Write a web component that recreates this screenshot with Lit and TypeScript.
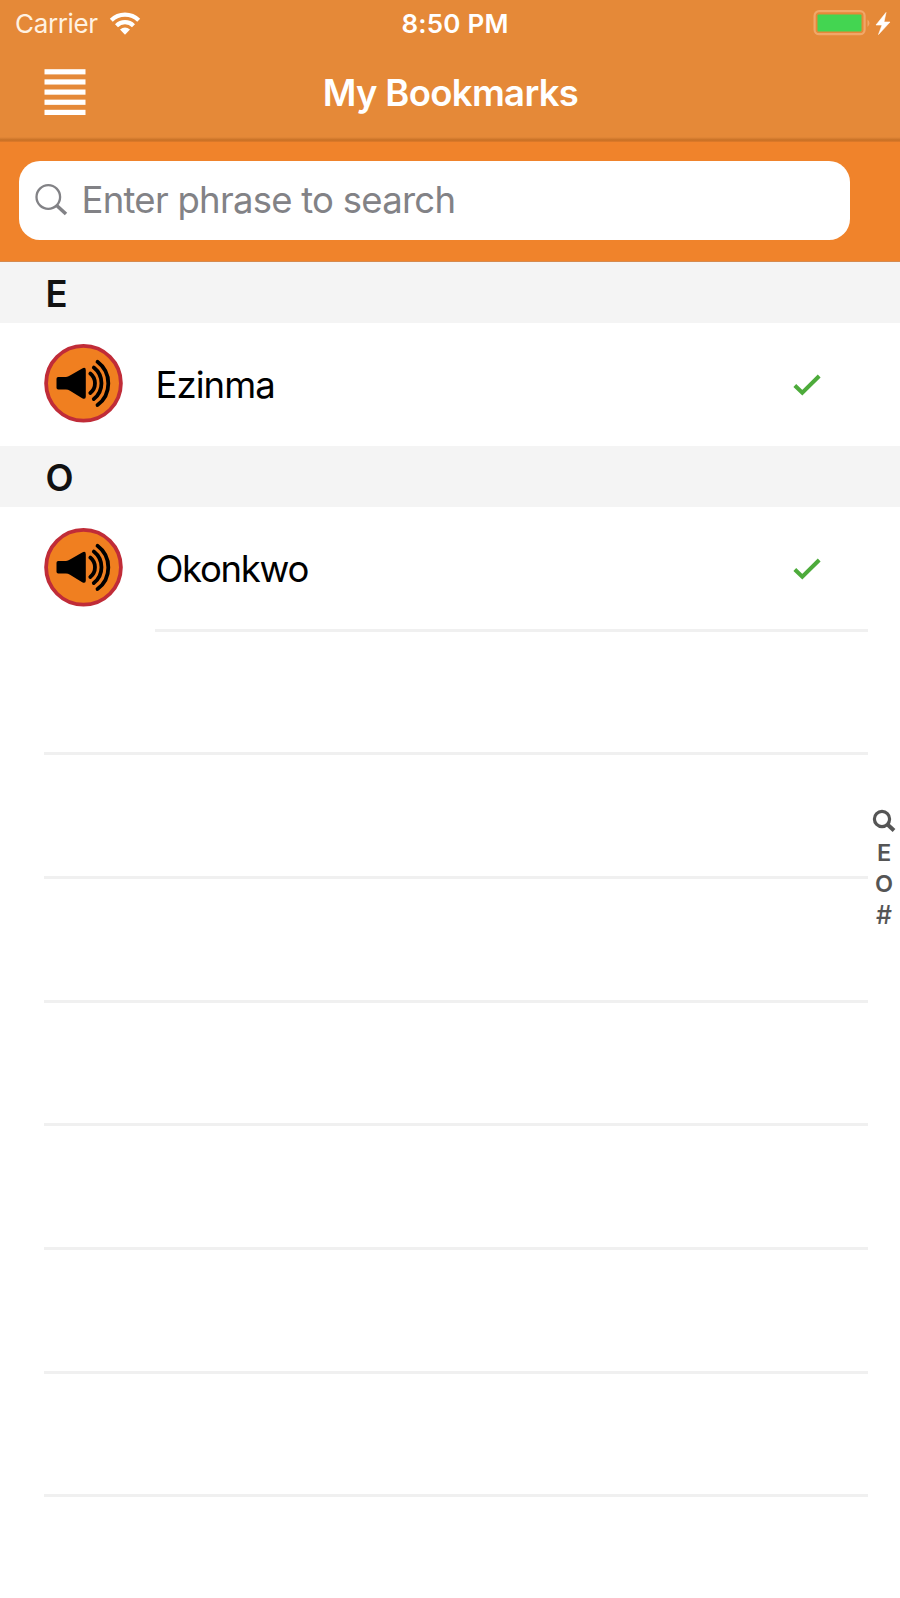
import { LitElement, html, css, svg } from "lit";
import { customElement, property } from "lit/decorators.js";

@customElement("speaker-badge")
class SpeakerBadge extends LitElement {
  static styles = css`
    :host { display: block; width: 80px; height: 80px; }
    .icon { display: block; }
  `;
  render() {
    return html`<svg class="icon" width="80" height="80" viewBox="0 0 80 80">
      <circle cx="39.5" cy="39.3" r="37.4" fill="#f07f20" stroke="#c02c38" stroke-width="3.800" />
      <path d="M14.200 33h7.800q2 0 4-1.400L38.200 24.400q3.600-1.700 3.600 1.800v26.300q0 3.500-3.600 1.800L26 46.800q-2-1.300-4-1.300h-7.800q-1.700 0-1.700-1.700v-9.100q0-1.700 1.700-1.700z" fill="#000" />
      <g fill="none" stroke="#000" stroke-width="3.800" stroke-linecap="round">
        <path d="M46.300 29.600a12.500 12.500 0 0 1 0 19.500" />
        <path d="M49.800 23.600a20 20 0 0 1 0 31.500" />
        <path d="M53.500 17.800a27 27 0 0 1 0 43.200" />
      </g>
    </svg>`;
  }
}

@customElement("bookmark-row")
class BookmarkRow extends LitElement {
  @property() name = "";
  static styles = css`
    :host { display: flex; box-sizing: border-box; height: 123.500px; padding: 21px 79px 0 44px; align-items: flex-start; }
    .name { flex: 1; margin-left: 31.500px; font-size: 36.500px; line-height: 44px; padding-top: 19px; color: #000; letter-spacing: var(--name-spacing, -0.95px); }
    .check { margin-top: 29px; }
  `;
  render() {
    return html`<speaker-badge></speaker-badge>
      <span class="name">${this.name}</span>
      <svg class="check" width="28" height="24" viewBox="0 0 28 24">
        <path d="M1.800 12.500L9.300 19.700L26.200 3" fill="none" stroke="#4dab3b" stroke-width="4" />
      </svg>`;
  }
}

@customElement("app-root")
class AppRoot extends LitElement {
  static styles = css`
    :host { display: block; position: relative; width: 900px; height: 1598px; overflow: hidden; background: #fff; font-family: Inter, "Liberation Sans", sans-serif; }
    .top { box-sizing: border-box; height: 142px; background: linear-gradient(#e58938 0 137px, #d17a2e 139px, #c66f24 140px, #e07b2b 142px); color: #fff; }
    .status { display: grid; grid-template-columns: 1fr auto 1fr; align-items: center; height: 48px; padding: 0 9px 0 15px; font-size: 26px; line-height: 32px; }
    .left { display: flex; align-items: center; gap: 11px; }
    .carrier { letter-spacing: -0.35px; color: #fff2e2; }
    .time { font-weight: 600; letter-spacing: 0.2px; padding-left: 3px; margin-right: -1px; }
    .right { display: flex; justify-content: flex-end; align-items: center; }
    .nav { display: grid; grid-template-columns: 1fr auto 1fr; align-items: start; padding: 21px 44px 0; }
    .title { font-size: 36.500px; font-weight: 600; line-height: 48px; letter-spacing: -0.68px; padding-left: 1px; }
    .search { box-sizing: border-box; height: 120px; padding: 19px 50px 0 18.500px; background: #f0832b; border-bottom: 1px solid #d58a50; }
    .field { box-sizing: border-box; height: 79px; display: flex; align-items: center; padding: 0 16px; background: #fff; border-radius: 21px; color: #828286; font-size: 36.500px; gap: 13px; }
    .hint { line-height: 44px; letter-spacing: -0.74px; margin-top: -2px; }
    .section { box-sizing: border-box; height: 60.500px; padding: 10px 45px 0 45.500px; background: #f4f4f4; font-size: 36.500px; line-height: 44px; font-weight: 600; color: #111; }
    .okonkwo { --name-spacing: -1.3px; }
    .line { margin: 0 32px 0 44px; height: 3px; background: #f0f0f0; }
    .line.inset { margin-left: 155px; margin-top: -1px; }
    .blank { display: flex; flex-direction: column; gap: 120.670px; padding-top: 120.300px; }
    .index { position: absolute; right: 2px; top: 808px; width: 28px; display: flex; flex-direction: column; align-items: center; color: #555; font-size: 23.500px; font-weight: 600; line-height: 31.300px; }
    .glass { height: 29px; }
    .hash { font-weight: 500; font-size: 25px; }
  `;
  render() {
    return html`
      <header class="top">
        <div class="status">
          <div class="left">
            <span class="carrier">Carrier</span>
            <svg width="32" height="24" viewBox="0 0 32 24">
              <g fill="none" stroke="#fff" stroke-width="4.200">
                <path d="M2.300 8.300a19.500 19.500 0 0 1 27.400 0" />
                <path d="M7.500 13.700a12 12 0 0 1 17 0" />
              </g>
              <path d="M11 17.500q5-4.200 10 0l-5 5.200z" fill="#fff" />
            </svg>
          </div>
          <span class="time">8:50 PM</span>
          <div class="right">
            <svg width="80" height="28" viewBox="0 0 80 28">
              <rect x="3.600" y="1.200" width="50" height="23" rx="4.500" fill="none" stroke="#f1a768" stroke-width="2.200" />
              <rect x="6.500" y="4.500" width="44" height="17" rx="1" fill="#43d551" />
              <path d="M56.500 9.500q4 3.500 0 7.500z" fill="#f1a768" />
              <path d="M75 2.500L65 15h6l-3.500 9.500L79 12H73z" fill="#fff" stroke="#fff" stroke-width="0.600" />
            </svg>
          </div>
        </div>
        <div class="nav">
          <svg width="42" height="48" viewBox="0 0 42 48">
            ${[0, 1, 2, 3, 4].map((i) => svg`<rect x="0.500" y=${0.2 + i * 10.15} width="41" height="5.200" fill="#fff" />`)}
          </svg>
          <span class="title">My Bookmarks</span>
        </div>
      </header>
      <div class="search">
        <div class="field">
          <svg width="34" height="34" viewBox="0 0 34 34" fill="none" stroke="#828286">
            <circle cx="13.300" cy="13" r="11.800" stroke-width="2.300" />
            <path d="M21.700 21.500L31 30" stroke-width="3.600" />
          </svg>
          <span class="hint">Enter phrase to search</span>
        </div>
      </div>
      <div class="section">E</div>
      <bookmark-row name="Ezinma"></bookmark-row>
      <div class="section">O</div>
      <bookmark-row class="okonkwo" name="Okonkwo"></bookmark-row>
      <div class="line inset"></div>
      <div class="blank">${[0, 1, 2, 3, 4, 5, 6].map(() => html`<div class="line"></div>`)}</div>
      <nav class="index">
        <svg class="glass" width="24" height="29" viewBox="0 0 24 29" fill="none" stroke="#555">
          <circle cx="10" cy="11" r="7.600" stroke-width="3.200" />
          <path d="M15.500 16.500L22 22.500" stroke-width="4" />
        </svg>
        <span>E</span><span>O</span><span class="hash">#</span>
      </nav>`;
  }
}
